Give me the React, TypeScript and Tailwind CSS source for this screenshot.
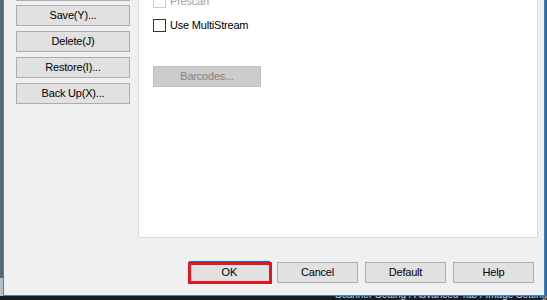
import React from 'react'

const font = { fontFamily: '"Liberation Sans", Arial, sans-serif' }

function SideButton({ label }: { label: string }) {
  return (
    <button
      type="button"
      className="flex h-[21px] w-[114px] items-center justify-center border border-[#adadad] bg-[#e1e1e1] text-[11px] leading-none tracking-[-0.2px] text-black"
    >
      {label}
    </button>
  )
}

function DialogButton({ label }: { label: string }) {
  return (
    <button
      type="button"
      className="flex h-[21px] w-[81px] items-center justify-center border border-[#adadad] bg-[#e1e1e1] text-[11px] leading-none tracking-[-0.2px] text-black"
    >
      {label}
    </button>
  )
}

function CheckRow({ label, disabled = false, className = '' }: { label: string; disabled?: boolean; className?: string }) {
  return (
    <div className={`flex h-[13px] items-center gap-[4px] ${className}`}>
      <span
        className={`h-[13px] w-[13px] shrink-0 border bg-white ${disabled ? 'border-[#cccccc]' : 'border-[#333333]'}`}
      />
      <span className={`text-[11px] leading-none tracking-[-0.2px] ${disabled ? 'text-[#a0a0a0]' : 'text-black'}`}>
        {label}
      </span>
    </div>
  )
}

export default function App() {
  return (
    <div className="flex h-[300px] w-[547px] flex-col overflow-hidden bg-[#1f1f1f]" style={font}>
      <div className="flex h-[296px]">
        {/* desktop behind the window */}
        <div className="flex w-[3px] flex-col">
          <div className="h-[278px] bg-[#566a7c]" />
          <div className="flex-1 bg-[#b9bec3]" />
        </div>

        <div className="flex w-[542px] flex-col border-x border-b border-[#2f86d8] bg-[#f0f0f0]">
          <div className="flex h-[238px]">
            <div className="flex w-[134px] flex-col pl-[12px]">
              {/* bottom edge of the button scrolled above */}
              <div className="h-[1px] w-[114px] bg-[#adadad]" />
              <div className="mt-[4px] flex flex-col gap-[5px]">
                <SideButton label="Save(Y)..." />
                <SideButton label="Delete(J)" />
                <SideButton label="Restore(I)..." />
                <SideButton label="Back Up(X)..." />
              </div>
            </div>

            <div className="flex w-[400px] flex-col border-b border-l border-r border-[#dadada] bg-white pl-[14px]">
              <CheckRow label="Prescan" disabled className="-mt-[5px]" />
              <CheckRow label="Use MultiStream" className="mt-[11px]" />
              <button
                type="button"
                className="mt-[34px] flex h-[21px] w-[108px] items-center justify-center border border-[#bfbfbf] bg-[#cccccc] text-[11px] leading-none tracking-[-0.2px] text-[#838383]"
              >
                Barcodes...
              </button>
            </div>
          </div>

          <div className="mt-[23px] flex items-end justify-end gap-[7px] pr-[10px]">
            <div className="relative">
              <button
                type="button"
                className="flex h-[22px] w-[81px] items-center justify-center border border-[#0078d7] bg-[#e1e1e1] text-[11px] leading-none text-black"
              >
                OK
              </button>
              <div className="pointer-events-none absolute -bottom-[1px] -left-[1px] -right-[2px] top-[1px] border-[3px] border-[#e8141e]" />
            </div>
            <DialogButton label="Cancel" />
            <DialogButton label="Default" />
            <DialogButton label="Help" />
          </div>
        </div>

        <div className="w-[2px] bg-[#4d6277]" />
      </div>

      {/* taskbar peeking in at the bottom */}
      <div className="h-[4px] overflow-hidden bg-[#1c1c1c] pl-[335px]">
        <div className="-mt-[6px] whitespace-nowrap text-[10px] leading-[10px] text-[#b8d4ee]">
          Scanner Setting / Advanced Tab / Image Setting
        </div>
      </div>
    </div>
  )
}
